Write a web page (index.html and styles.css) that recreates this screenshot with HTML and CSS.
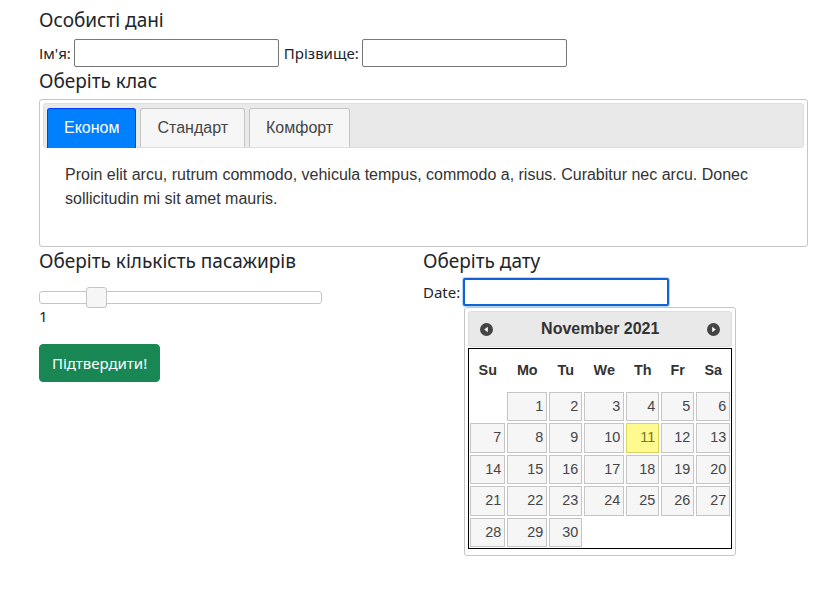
FILE: index.html
```html
<!DOCTYPE html>
<html lang="uk">
<head>
<meta charset="utf-8">
<title>Бронювання</title>
<link rel="stylesheet" href="styles.css">
</head>
<body>
<div class="page">
  <h5 class="title title-top">Особисті дані</h5>
  <div class="name-row">
    <label class="lbl">Ім'я:</label>
    <input class="text-input" type="text">
    <label class="lbl lbl-gap">Прізвище:</label>
    <input class="text-input" type="text">
  </div>
  <h5 class="title title-class">Оберіть клас</h5>
  <div class="tabs">
    <ul class="tabs-nav">
      <li class="tab tab-active">Економ</li>
      <li class="tab">Стандарт</li>
      <li class="tab">Комфорт</li>
    </ul>
    <div class="panel">
      <p>Proin elit arcu, rutrum commodo, vehicula tempus, commodo a, risus. Curabitur nec arcu. Donec sollicitudin mi sit amet mauris.</p>
    </div>
  </div>
  <div class="bottom">
    <div class="col">
      <h5 class="title title-bottom">Оберіть кількість пасажирів</h5>
      <div class="slider"><span class="handle" style="left:20%"></span></div>
      <div class="count">1</div>
      <button class="btn" type="button">Підтвердити!</button>
    </div>
    <div class="col">
      <h5 class="title title-bottom">Оберіть дату</h5>
      <div class="date-field">
        <label class="lbl">Date:</label>
        <span class="date-wrap">
          <input class="text-input focused" type="text">
          <div class="datepicker">
            <div class="dp-header">
              <span class="dp-nav dp-prev">
                <svg width="13" height="13" viewBox="0 0 13 13"><circle cx="6.5" cy="6.5" r="6.5" fill="#444"/><path d="M4.2 6.5 L7.8 3.8 L7.8 9.2 Z" fill="#fff"/></svg>
              </span>
              <span class="dp-title">November 2021</span>
              <span class="dp-nav dp-next">
                <svg width="13" height="13" viewBox="0 0 13 13"><circle cx="6.5" cy="6.5" r="6.5" fill="#444"/><path d="M8.8 6.5 L5.2 3.8 L5.2 9.2 Z" fill="#fff"/></svg>
              </span>
            </div>
            <div class="dp-grid">
              <div class="dp-th">Su</div><div class="dp-th">Mo</div><div class="dp-th">Tu</div><div class="dp-th">We</div><div class="dp-th">Th</div><div class="dp-th">Fr</div><div class="dp-th">Sa</div>
              <div class="dp-td"></div>
              <div class="dp-td"><a class="day">1</a></div>
              <div class="dp-td"><a class="day">2</a></div>
              <div class="dp-td"><a class="day">3</a></div>
              <div class="dp-td"><a class="day">4</a></div>
              <div class="dp-td"><a class="day">5</a></div>
              <div class="dp-td"><a class="day">6</a></div>
              <div class="dp-td"><a class="day">7</a></div>
              <div class="dp-td"><a class="day">8</a></div>
              <div class="dp-td"><a class="day">9</a></div>
              <div class="dp-td"><a class="day">10</a></div>
              <div class="dp-td"><a class="day day-today">11</a></div>
              <div class="dp-td"><a class="day">12</a></div>
              <div class="dp-td"><a class="day">13</a></div>
              <div class="dp-td"><a class="day">14</a></div>
              <div class="dp-td"><a class="day">15</a></div>
              <div class="dp-td"><a class="day">16</a></div>
              <div class="dp-td"><a class="day">17</a></div>
              <div class="dp-td"><a class="day">18</a></div>
              <div class="dp-td"><a class="day">19</a></div>
              <div class="dp-td"><a class="day">20</a></div>
              <div class="dp-td"><a class="day">21</a></div>
              <div class="dp-td"><a class="day">22</a></div>
              <div class="dp-td"><a class="day">23</a></div>
              <div class="dp-td"><a class="day">24</a></div>
              <div class="dp-td"><a class="day">25</a></div>
              <div class="dp-td"><a class="day">26</a></div>
              <div class="dp-td"><a class="day">27</a></div>
              <div class="dp-td"><a class="day">28</a></div>
              <div class="dp-td"><a class="day">29</a></div>
              <div class="dp-td"><a class="day">30</a></div>
              <div class="dp-td"></div><div class="dp-td"></div><div class="dp-td"></div><div class="dp-td"></div>
            </div>
          </div>
        </span>
      </div>
    </div>
  </div>
</div>
</body>
</html>
```

FILE: styles.css
```css
html {
  height: 100%;
}

html, body {
  margin: 0;
  background: #fff;
}

body {
  min-height: 100%;
  font-family: "Noto Sans", "Open Sans", sans-serif;
  font-size: 15px;
  line-height: 1.5;
  color: #212529;
}

.page {
  min-height: 600px;
  padding: 8px 12px 0 39px;
}

.title {
  font-size: 19px;
  line-height: 24px;
  font-weight: 400;
  margin: 0;
  color: #212529;
}

.title-top {
  margin-bottom: 7px;
}

.title-class {
  margin: 2px 0 6px;
}

.title-bottom {
  margin-top: 2px;
}

.name-row {
  display: flex;
  align-items: center;
  height: 28px;
}

.lbl {
  margin-right: 3px;
}

.lbl-gap {
  margin-left: 5px;
}

.text-input {
  box-sizing: border-box;
  width: 205px;
  height: 28px;
  margin: 0;
  padding: 1px 2px;
  border: 1px solid #767676;
  border-radius: 2px;
  font: inherit;
  background: #fff;
}

.text-input.focused {
  width: 206px;
  border: 2px solid #1062d5;
  box-shadow: 0 0 0 1px #b8d7f4;
  outline: none;
}

/* Tabs */
.tabs {
  border: 1px solid #c5c5c5;
  border-radius: 3px;
  padding: 3px;
  font-family: "Liberation Sans", Arial, sans-serif;
  font-size: 16px;
  background: #fff;
}

.tabs-nav {
  display: flex;
  gap: 4px;
  list-style: none;
  margin: 0;
  padding: 4px 3px 0;
  background: #e9e9e9;
  border: 1px solid #ddd;
  border-radius: 3px;
  height: 39px;
}

.tab {
  height: 38px;
  line-height: 38px;
  padding: 0 16px;
  border: 1px solid #c5c5c5;
  border-bottom: 0;
  border-radius: 3px 3px 0 0;
  background: #f6f6f6;
  color: #454545;
}

.tab-active {
  height: 39px;
  margin-bottom: -1px;
  background: #007fff;
  border-color: #003eff;
  color: #fff;
}

.panel {
  padding: 15px 22px 16px;
}

.panel p {
  margin: 0 0 16px;
  color: #333;
  line-height: 24px;
}

/* Bottom */
.bottom {
  display: grid;
  grid-template-columns: 384px 1fr;
}

.slider {
  position: relative;
  box-sizing: border-box;
  width: 283px;
  height: 13px;
  margin-top: 18px;
  border: 1px solid #c5c5c5;
  border-radius: 3px;
  background: #fff;
}

.handle {
  position: absolute;
  top: -5px;
  width: 19px;
  height: 19px;
  margin-left: -10px;
  border: 1px solid #c5c5c5;
  border-radius: 3px;
  background: #f6f6f6;
}

.count {
  line-height: 24px;
}

.btn {
  margin-top: 16px;
  padding: 6px 12px;
  font: inherit;
  line-height: 24px;
  color: #fff;
  background: #198754;
  border: 1px solid #198754;
  border-radius: 4px;
}

.date-field {
  display: flex;
  align-items: center;
  margin-top: 5px;
}

.date-wrap {
  position: relative;
  display: inline-block;
  height: 28px;
}

/* Datepicker */
.datepicker {
  position: absolute;
  top: 29px;
  left: 1px;
  width: 272px;
  box-sizing: border-box;
  padding: 3px 3px 6px;
  background: #fff;
  border: 1px solid #c5c5c5;
  border-radius: 3px;
  font-family: "Liberation Sans", Arial, sans-serif;
  color: #333;
  z-index: 5;
}

.dp-header {
  display: flex;
  align-items: center;
  justify-content: space-between;
  height: 34px;
  padding: 0 11px;
  background: #e9e9e9;
  border: 1px solid #ddd;
  border-radius: 3px;
}

.dp-nav {
  display: flex;
  width: 13px;
  height: 13px;
}

.dp-title {
  font-weight: 700;
  font-size: 16px;
  color: #333;
}

.dp-grid {
  display: grid;
  grid-template-columns: 37px 42px 35px 42px 35px 35px 36px;
  grid-template-rows: 42px repeat(5, 31.4px);
  margin-top: 1px;
  border: 1px solid #000;
  font-size: 14.4px;
}

.dp-th {
  display: flex;
  align-items: center;
  justify-content: center;
  padding-top: 1px;
  font-weight: 700;
  color: #333;
}

.dp-td {
  padding: 1px;
}

.day {
  display: block;
  box-sizing: border-box;
  height: 100%;
  padding: 0 3px;
  line-height: 27px;
  text-align: right;
  border: 1px solid #c5c5c5;
  background: #f6f6f6;
  color: #454545;
}

.day-today {
  background: #fffa90;
  border-color: #dad55e;
  color: #777620;
}
```
